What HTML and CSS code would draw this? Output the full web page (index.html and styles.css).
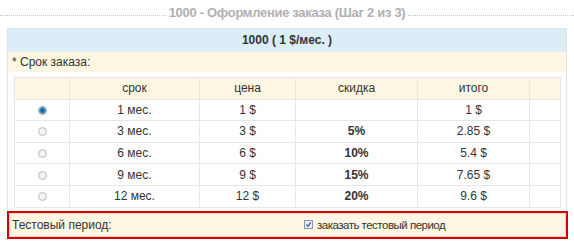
FILE: index.html
```html
<!DOCTYPE html>
<html lang="ru">

<head>
    <meta charset="utf-8">
    <title>Оформление заказа</title>
    <link rel="stylesheet" href="styles.css">
</head>

<body>
    <div class="step-title">
        <span class="step-text">1000 - Оформление заказа (Шаг 2 из 3)</span>
    </div>

    <div class="order-box">
        <div class="box-head">1000 ( 1 $/мес. )</div>
        <div class="field-label">* Срок заказа:</div>

        <!-- Period table -->
        <div class="table-wrap">
            <table class="period-table">
                <colgroup>
                    <col style="width: 55px">
                    <col style="width: 130px">
                    <col style="width: 96px">
                    <col style="width: 122px">
                    <col style="width: 112px">
                    <col>
                </colgroup>
                <thead>
                    <tr>
                        <th></th>
                        <th>срок</th>
                        <th>цена</th>
                        <th>скидка</th>
                        <th>итого</th>
                        <th></th>
                    </tr>
                </thead>
                <tbody>
                    <tr>
                        <td><span class="radio checked"></span></td>
                        <td>1 мес.</td>
                        <td>1 $</td>
                        <td></td>
                        <td>1 $</td>
                        <td></td>
                    </tr>
                    <tr>
                        <td><span class="radio"></span></td>
                        <td>3 мес.</td>
                        <td>3 $</td>
                        <td class="discount">5%</td>
                        <td>2.85 $</td>
                        <td></td>
                    </tr>
                    <tr>
                        <td><span class="radio"></span></td>
                        <td>6 мес.</td>
                        <td>6 $</td>
                        <td class="discount">10%</td>
                        <td>5.4 $</td>
                        <td></td>
                    </tr>
                    <tr>
                        <td><span class="radio"></span></td>
                        <td>9 мес.</td>
                        <td>9 $</td>
                        <td class="discount">15%</td>
                        <td>7.65 $</td>
                        <td></td>
                    </tr>
                    <tr>
                        <td><span class="radio"></span></td>
                        <td>12 мес.</td>
                        <td>12 $</td>
                        <td class="discount">20%</td>
                        <td>9.6 $</td>
                        <td></td>
                    </tr>
                </tbody>
            </table>
        </div>
    </div>

    <!-- Trial period row (highlighted) -->
    <div class="trial-row">
        <div class="trial-label">Тестовый период:</div>
        <label class="trial-value">
            <svg class="checkbox" width="9" height="9" viewBox="0 0 9 9">
                <rect x="0.5" y="0.5" width="8" height="8" fill="#e9eef4" stroke="#8a96a4" />
                <path d="M2.3 4.6 L3.9 6.3 L6.8 2.4" fill="none" stroke="#2a5ea8" stroke-width="1.3" />
            </svg>
            заказать тестовый период
        </label>
    </div>
</body>

</html>
```

FILE: styles.css
```css
body {
    margin: 0;
    background-color: #ffffff;
    color: #333333;
    font-family: "Liberation Sans", Arial, sans-serif;
    font-size: 12px;
}

.step-title {
    display: flex;
    align-items: center;
    height: 24px;
    margin-bottom: 4px;
}

.step-title::before,
.step-title::after {
    content: "";
    flex: 1;
    border-top: 1px dotted #c8c8c8;
    margin-top: 6px;
}

.step-text {
    padding: 0 3px;
    font-size: 13px;
    letter-spacing: -0.3px;
    font-weight: bold;
    color: #b0b0b0;
}

.order-box {
    margin: 0 7px;
    border: 1px solid #e2e2e2;
    border-bottom: none;
}

.box-head {
    height: 22px;
    line-height: 22px;
    text-align: center;
    font-weight: bold;
    background-color: #dbedf7;
    border-bottom: 1px solid #e8eef2;
}

.field-label {
    height: 20px;
    line-height: 20px;
    padding-left: 4px;
    background-color: #fcf6e2;
}

.table-wrap {
    padding: 5px 5px 2px 6px;
}

.period-table {
    width: 100%;
    border-collapse: collapse;
    table-layout: fixed;
    border: 1px solid #e3e3e3;
}

.period-table th,
.period-table td {
    height: 20.6px;
    padding: 0;
    text-align: center;
    border: 1px solid #e6e6e6;
}

.period-table th {
    font-weight: normal;
    background-color: #fcf6e2;
}

.period-table .discount {
    font-weight: bold;
}

.radio {
    display: inline-block;
    width: 7px;
    height: 7px;
    border: 1px solid #c2c2c2;
    border-radius: 50%;
    background: radial-gradient(circle, #f6f6f6 30%, #d9d9d9 100%);
    vertical-align: middle;
    margin-top: -1px;
}

.radio.checked {
    border-color: #9aa6b0;
    background: radial-gradient(circle, #0f6aa8 35%, #5f9cc4 60%, #e0e6ea 75%);
}

.trial-row {
    display: flex;
    align-items: center;
    height: 24px;
    margin: 1px 6px 0 7px;
    border: 2px solid #d40000;
    box-shadow: inset 0 0 0 1px #f3d8c4;
    background-color: #fcf6e2;
}

.trial-label {
    width: 292px;
    padding-left: 3px;
}

.trial-value {
    display: flex;
    align-items: center;
    gap: 4px;
    font-size: 11.5px;
    letter-spacing: -0.5px;
}

.checkbox {
    display: block;
}
```
